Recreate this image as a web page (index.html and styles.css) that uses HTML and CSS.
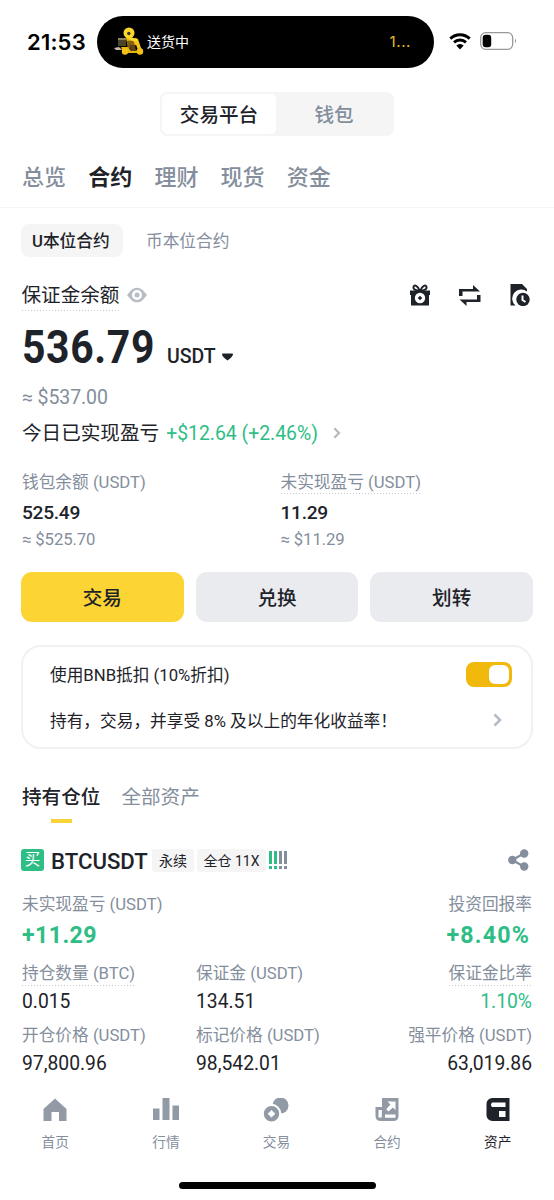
FILE: index.html
```html
<!DOCTYPE html>
<html lang="zh-CN">
<head>
<meta charset="utf-8">
<title>资产</title>
<link rel="stylesheet" href="styles.css">
</head>
<body>
<div class="phone">
  <header class="status">
    <span class="time">21:53</span>
    <div class="island">
      <svg class="rider" width="30" height="29" viewBox="0 0 30 29">
        <path d="M4 11h8v8H4z" fill="#4b452e"/><path d="M4 11h8v2H4z" fill="#8a8259"/>
        <path d="M0 21l5-1 3 3H2z" fill="#c9b9b0"/>
        <path d="M12 11l7 0 4 3-1 4-8 2z" fill="#e9b80f"/>
        <path d="M13 14l6-1 2 6-7 3z" fill="#86600f"/>
        <path d="M21 11l3 1 3 9-3 2-3-8z" fill="#f4c51c"/>
        <path d="M7 20h7l3 4h5l4-4 3 3-2 3H9z" fill="#e9b60f"/>
        <path d="M15 18l6 0 1 6-5 0z" fill="#5c4214"/>
        <circle cx="11" cy="24.500" r="3.200" fill="#f2c316"/><circle cx="26" cy="24.500" r="3.200" fill="#f2c316"/>
        <circle cx="15" cy="6" r="5.500" fill="#fbd72c"/><circle cx="14.800" cy="6.500" r="1.700" fill="#35352a"/>
        <path d="M17 12l5 1" stroke="#fbd72c" stroke-width="3" stroke-linecap="round"/>
      </svg>
      <span class="island-text">送货中</span>
      <span class="island-count">1...</span>
    </div>
    <svg class="wifi" width="22" height="17" viewBox="0 0 22 17">
      <path d="M1.300 5.600a14 14 0 0 1 19.400 0M5 9.400a8.700 8.700 0 0 1 12 0" fill="none" stroke="#000" stroke-width="2.900"/>
      <path d="M7.300 12.500a5.300 5.300 0 0 1 7.400 0L11 16.400z"/>
    </svg>
    <svg class="battery" width="38" height="18" viewBox="0 0 38 18">
      <rect x=".7" y=".7" width="32" height="16.600" rx="5" fill="none" stroke="#999" stroke-width="1.300"/>
      <rect x="2.700" y="2.700" width="8.500" height="12.600" rx="3"/>
      <path d="M35 6.800q2 2.200 0 4.400z" fill="#888"/>
    </svg>
  </header>

  <div class="segment"><span class="seg on">交易平台</span><span class="seg">钱包</span></div>

  <nav class="tabs"><span>总览</span><span class="on">合约</span><span>理财</span><span>现货</span><span>资金</span></nav>

  <main>
    <div class="chips"><span class="chip on">U本位合约</span><span class="chip">币本位合约</span></div>

    <div class="bal-head">
      <span class="bal-title dotted">保证金余额</span>
      <svg class="eye" width="20" height="16" viewBox="0 0 20 16"><path fill-rule="evenodd" d="M0 8L4 3.300C7.500-.2 12.500-.2 16 3.300L20 8l-4 4.700c-3.500 3.500-8.500 3.500-12 0zM10 3a5 5 0 1 0 0 10 5 5 0 0 0 0-10z" fill="#b7bdc6"/><circle cx="10" cy="8" r="2.500" fill="#b7bdc6"/></svg>
      <div class="tools">
        <svg width="20" height="22" viewBox="0 0 20 22"><path d="M9.500 6.500C7 6.500 3 5.800 3.500 3S8 1.500 9.500 6.500zM10.500 6.500c2.500 0 6.500-.7 6-3.500S12 1.500 10.500 6.500z" fill="none" stroke="#1e2329" stroke-width="2"/><path d="M0 6.500h20v4.500h-1v10.500H1V11H0z" fill="#1e2329"/><circle cx="10" cy="14" r="5.200" fill="#fff"/><path d="M10 11.700l2.300 2.300-2.300 2.300-2.300-2.300z" fill="#1e2329"/></svg>
        <svg width="22" height="21" viewBox="0 0 22 21"><path d="M0 4h14V0l7 6.500H3.500V11H0zM21.500 17H7.500v4l-7-6.500H18V10h3.500z" fill="#1e2329"/></svg>
        <svg width="20" height="22" viewBox="0 0 20 22"><path d="M.5 0H12l5 5v2.500A8.500 8.500 0 0 0 5.500 21.500h-5z" fill="#1e2329"/><circle cx="13" cy="15.500" r="6.700" fill="#1e2329"/><path d="M12.500 11.500v4.500l3 2" fill="none" stroke="#fff" stroke-width="2"/></svg>
      </div>
    </div>

    <div class="amount"><strong>536.79</strong><span>USDT</span><svg width="11" height="8" viewBox="0 0 11 8"><path d="M0 1.200Q0 .5 1 .5h9q1 0 1 .7Q10.500 4 5.500 7.500.5 4 0 1.200z" fill="#1e2329"/></svg></div>
    <div class="approx-lg">≈ $537.00</div>
    <div class="today"><span>今日已实现盈亏</span><em>+$12.64 (+2.46%)</em><svg width="8" height="12" viewBox="0 0 8 12"><path d="M1.300 1.300L6 6l-4.700 4.700" fill="none" stroke="#b7b9bd" stroke-width="2.200"/></svg></div>

    <div class="metrics">
      <div><div class="label"><span>钱包余额 (USDT)</span></div><div class="value">525.49</div><div class="approx">≈ $525.70</div></div>
      <div><div class="label"><span class="dotted">未实现盈亏 (USDT)</span></div><div class="value">11.29</div><div class="approx">≈ $11.29</div></div>
    </div>

    <div class="buttons"><div class="btn primary">交易</div><div class="btn">兑换</div><div class="btn">划转</div></div>

    <section class="card">
      <div class="card-row"><span>使用BNB抵扣 (10%折扣)</span><i class="toggle"></i></div>
      <div class="card-row"><span>持有，交易，并享受 8% 及以上的年化收益率！</span><svg class="arrow" width="10" height="14" viewBox="0 0 10 14"><path d="M1.500 1.500L7 7l-5.500 5.500" fill="none" stroke="#b7bdc6" stroke-width="2.600"/></svg></div>
    </section>

    <div class="subtabs"><span class="on">持有仓位</span><span>全部资产</span></div>

    <section class="position">
      <div class="pos-head">
        <span class="buy">买</span><b>BTCUSDT</b><span class="tag">永续</span><span class="tag lev">全仓 11X</span>
        <svg class="bars" width="18" height="18" viewBox="0 0 18 18"><path d="M0 0h3v13H0zM5 0h3v13H5zM0 15h3v3H0zM5 15h3v3H5z" fill="#2ebd85"/><path d="M10 0h3v13h-3zM15 0h3v13h-3z" fill="#848e9c"/><path d="M10 15h3v3h-3zM15 15h3v3h-3z" fill="#848e9c"/></svg>
        <svg class="share" width="21" height="22" viewBox="0 0 21 22"><path d="M4 11L16 4.500M4 11l12 6.500" stroke="#848e9c" stroke-width="2.300"/><g fill="#848e9c"><circle cx="4.300" cy="11" r="4.200"/><circle cx="16.200" cy="4.500" r="4.200"/><circle cx="16.200" cy="17.500" r="4.200"/></g></svg>
      </div>
      <div class="pnl">
        <div><div class="label"><span>未实现盈亏 (USDT)</span></div><div class="big">+11.29</div></div>
        <div class="end"><div class="label"><span>投资回报率</span></div><div class="big rate">+8.40%</div></div>
      </div>
      <div class="grid">
        <div><div class="label"><span class="dotted">持仓数量 (BTC)</span></div><div class="num">0.015</div></div>
        <div><div class="label"><span>保证金 (USDT)</span></div><div class="num">134.51</div></div>
        <div class="end"><div class="label"><span class="dotted">保证金比率</span></div><div class="num up">1.10%</div></div>
        <div><div class="label"><span>开仓价格 (USDT)</span></div><div class="num">97,800.96</div></div>
        <div><div class="label"><span>标记价格 (USDT)</span></div><div class="num">98,542.01</div></div>
        <div class="end"><div class="label"><span>强平价格 (USDT)</span></div><div class="num">63,019.86</div></div>
      </div>
    </section>
  </main>

  <nav class="bottom">
    <span><svg width="26" height="24" viewBox="0 0 26 24"><path d="M13 .5L24.500 11v12H17v-9H9.500v9h-8V11z" fill="#929aa5"/></svg>首页</span>
    <span><svg width="26" height="24" viewBox="0 0 26 24"><path d="M0 10.500h6.500V22H0zM9.500 0h7v22h-7zM19.500 7.500H26V22h-6.500z" fill="#929aa5"/></svg>行情</span>
    <span><svg width="26" height="24" viewBox="0 0 26 24"><circle cx="17.500" cy="7.500" r="8" fill="#929aa5"/><circle cx="8.500" cy="15.500" r="9.700" fill="#fff"/><path fill-rule="evenodd" d="M8.500 8a7.700 7.700 0 1 0 0 15.400 7.700 7.700 0 0 0 0-15.400zm0 3.900l3.800 3.800-3.800 3.800-3.800-3.800z" fill="#929aa5"/></svg>交易</span>
    <span><svg width="26" height="24" viewBox="0 0 26 24"><path d="M8-.5h16.500V18q0 5-5 5H7q-5.500 0-5.500-5V9H8z" fill="#929aa5"/><path d="M4.500 12h3.300v7.500H4.500zM11 16.500h10.500v3.300H11zM13.500 3.500h8V12l-2.600-2.600-4.400 4.100-2.300-2.300 4.200-4.600z" fill="#fff"/></svg>合约</span>
    <span class="on"><svg width="26" height="24" viewBox="0 0 26 24"><path d="M7 0h17.500v23H7q-5.500-1-5.500-6V6Q1.500 1 7 0z" fill="#1e2329"/><path d="M7 4.500h13.500V9H7q-2-2.200 0-4.500zM14 13h6.500v6H14z" fill="#fff"/></svg>资产</span>
  </nav>
  <div class="home-bar"></div>
</div>
</body>
</html>
```
FILE: styles.css
```css
* { box-sizing: border-box; }
body { margin: 0; background: #fff; color: #1e2329; font-family: Roboto, "Noto Sans CJK SC", sans-serif; font-size: 16.7px; }
svg { display: block; flex: none; }
span, div { white-space: nowrap; }
.phone { width: 554px; height: 1200px; overflow: hidden; display: flex; flex-direction: column; }

.status { height: 84px; display: flex; align-items: center; padding-left: 27px; flex: none; }
.time { width: 70px; font: 600 22px/26px Inter, sans-serif; color: #000; letter-spacing: .2px; }
.island { width: 337px; height: 52px; border-radius: 26px; background: #000; display: flex; align-items: center; padding: 0 23px 0 17px; }
.rider { margin-right: 3px; margin-top: -2px; }
.island-text { color: #fff; font-size: 14px; line-height: 20px; }
.island-count { margin-left: auto; color: #e8bb25; font: 15px/20px Inter, sans-serif; letter-spacing: .6px; }
.wifi { margin-left: 15px; margin-top: -2px; }
.battery { margin-left: 9px; margin-top: -2px; }

.segment { margin: 8px auto 0 160px; width: 234px; height: 44px; flex: none; display: flex; padding: 2px; background: #f5f5f5; border-radius: 7px; font-size: 19.6px; line-height: 40px; text-align: center; }
.seg { width: 116px; padding-top: 2px; color: #848e9c; font-weight: 500; }
.seg.on { width: 114px; background: #fff; border-radius: 5px; color: #1e2329; }

.tabs { height: 72px; flex: none; display: flex; gap: 22.2px; padding: 9px 0 0 22px; border-bottom: 1px solid #f5f5f5; font-size: 22px; line-height: 66px; font-weight: 500; color: #848e9c; }
.tabs .on { color: #1e2329; font-weight: 700; }

main { padding: 16px 22px 0; flex: none; }
.chips { display: flex; height: 33px; line-height: 36px; margin-left: -1px; color: #848e9c; }
.chip { padding: 0 12px; }
.chip.on { width: 102px; padding: 0 11px; background: #f5f5f5; border-radius: 8px; color: #1e2329; font-weight: 500; margin-right: 11px; }

.dotted { display: inline-block; background: repeating-linear-gradient(90deg, #c5c9cf 0 1.500px, transparent 1.500px 3px) left bottom / 100% 1.500px no-repeat; }
.bal-head { display: flex; align-items: center; height: 32px; margin-top: 22px; }
.bal-title { font-size: 19.6px; line-height: 30px; padding-top: 2px; margin-left: -.5px; }
.eye { margin-left: 7.500px; }
.tools { margin-left: auto; margin-right: 2px; display: flex; align-items: center; gap: 29px; }

.amount { height: 71px; display: flex; align-items: baseline; line-height: 72px; }
.amount strong { font-size: 46px; letter-spacing: .700px; width: 145px; transform: scaleX(.89); transform-origin: left; }
.amount span { font-size: 19.500px; font-weight: 500; }
.amount svg { margin-left: 6px; transform: translateY(-2px); }
.approx-lg { height: 30px; line-height: 32px; font-size: 19.500px; color: #848e9c; letter-spacing: -.1px; }
.today { height: 42px; display: flex; align-items: center; font-size: 19.600px; line-height: 42px; }
.today span { line-height: 43px; height: 42px; }
.today em { margin-left: 7px; font-style: normal; line-height: 43px; height: 42px; color: #2ebd85; font-size: 19.400px; }
.today svg { margin-left: 15px; }

.label { color: #848e9c; }
.end { text-align: right; }
.metrics { display: grid; grid-template-columns: 258.500px 1fr; margin-top: 14px; }
.metrics .label { height: 28px; line-height: 30px; }
.metrics .dotted { line-height: 23px; padding-top: 2px; }
.value { height: 31px; line-height: 33px; font-size: 19.200px; font-weight: 500; letter-spacing: -.3px; }
.approx { height: 24px; line-height: 26px; color: #848e9c; letter-spacing: -.1px; }

.buttons { display: grid; grid-template-columns: repeat(3, 1fr); gap: 12px; margin: 21px -1px 0; }
.btn { height: 50px; line-height: 53px; border-radius: 11px; background: #eaebef; text-align: center; font-size: 19.600px; font-weight: 500; }
.btn.primary { background: #fcd535; }

.card { height: 104px; margin: 23px -1px 0; padding: 4px 19px 0 27px; border: 2px solid #f0f1f3; border-radius: 20px; }
.card-row { height: 46px; display: flex; align-items: center; justify-content: space-between; }
.toggle { width: 46px; height: 25px; padding: 3px; border-radius: 8px; background: #f0b90b; display: flex; justify-content: flex-end; }
.toggle::before { content: ""; width: 20px; height: 19px; background: #fff; border-radius: 6px; }
.arrow { margin-right: 9px; }

.subtabs { height: 74px; padding-top: 35px; display: flex; gap: 21px; font-size: 19.600px; line-height: 28px; color: #848e9c; }
.subtabs .on { color: #1e2329; font-weight: 500; }
.subtabs .on::after { content: ""; display: block; width: 21px; height: 4px; margin: 7px auto 0; background: #f8d33a; }

.pos-head { display: flex; align-items: center; height: 22px; margin: 26px 0 0 -1px; }
.buy { width: 23px; height: 22px; line-height: 23px; text-align: center; background: #2ebd85; color: #fff; border-radius: 3px; font-size: 15.500px; }
.pos-head b { margin-left: 7px; width: 101px; font-size: 22.200px; font-weight: 500; line-height: 24px; padding-top: 2px; }
.tag { height: 23px; width: 42px; line-height: 24px; text-align: center; background: #f5f5f5; border-radius: 3px; font-size: 14px; }
.tag.lev { width: 69px; margin-left: 3px; }
.bars { margin-left: 3px; }
.share { margin-left: auto; margin-right: 3px; }
.pnl { display: flex; justify-content: space-between; margin-top: 20px; }
.pnl .label { height: 26px; line-height: 28px; }
.big { height: 35px; line-height: 36px; font-size: 23.200px; font-weight: 700; color: #2ebd85; letter-spacing: .4px; }
.rate { margin-right: 2px; letter-spacing: 1.200px; }
.grid { display: grid; grid-template-columns: 174px 1fr auto; margin-top: 8px; row-gap: 7px; }
.grid .label { height: 27px; line-height: 28px; }
.grid .dotted { line-height: 25px; padding-top: 1px; }
.num { height: 28px; line-height: 29px; font-size: 19.300px; }
.up { color: #2ebd85; }

.bottom { display: grid; grid-template-columns: repeat(5, 110.600px); flex: none; margin-top: 21px; color: #848e9c; font-size: 13.700px; }
.bottom span { display: flex; flex-direction: column; align-items: center; line-height: 20px; gap: 10px; }
.bottom .on { color: #1e2329; }
.home-bar { width: 197px; height: 7px; margin: 30px 0 0 179px; border-radius: 4px; background: #000; flex: none; }
```
